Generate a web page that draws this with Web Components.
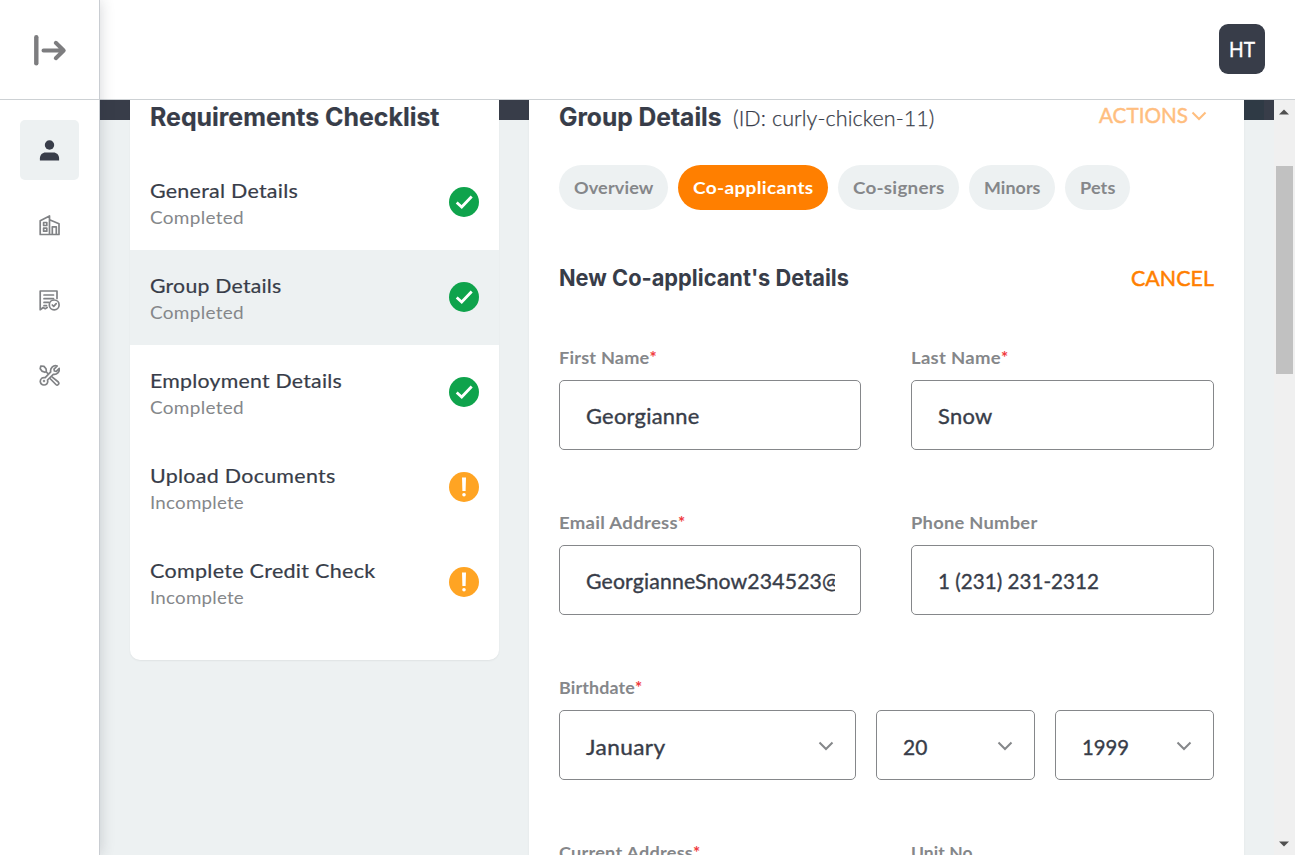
<!DOCTYPE html>
<html lang="en">
<head>
<meta charset="utf-8">
<title>Group Details</title>
<style>
html,body{margin:0;height:100%;overflow:hidden;background:#fff}
body{font-family:Lato,"Liberation Sans",sans-serif;color:#383d49}
</style>
</head>
<body>
<portal-app></portal-app>
<script>
const define = (name, html, after) => customElements.define(name, class extends HTMLElement {
  connectedCallback() {
    if (!this.shadowRoot) {
      const t = document.createElement('template');
      t.innerHTML = typeof html === 'function' ? html(this) : html;
      this.attachShadow({mode: 'open'}).append(t.content.cloneNode(true));
    }
    if (after) after(this);
  }
});

/* A single line of text whose glyphs are widened or narrowed to a given measure. */
define('ui-text', `<style>
:host{display:block;white-space:pre;width:max-content}
span{display:inline-block;transform-origin:0 50%}
:host([kind=title]){font:700 25px/30px Inter,sans-serif;-webkit-text-stroke:.2px currentColor}
:host([kind=subtitle]){font:700 22.5px/30px Inter,sans-serif}
:host([kind=id]){font:300 21px/30px Lato,sans-serif;-webkit-text-stroke:.25px currentColor}
:host([kind=item]){font:400 20px/26px Lato,sans-serif;-webkit-text-stroke:.2px currentColor}
:host([kind=state]){font:400 17.5px/24px Lato,sans-serif;color:#85878a}
:host([kind=label]){font:700 17px/20px Lato,sans-serif;color:#85878a}
:host([kind=pill]){font:700 17.5px/24px Lato,sans-serif}
:host([kind=value]){font:400 20.5px/28px Lato,sans-serif;-webkit-text-stroke:.35px currentColor}
:host([kind=link]){font:400 21px/28px Lato,sans-serif;-webkit-text-stroke:.5px currentColor}
</style><span><slot></slot></span>`, el => {
  const w = +el.getAttribute('w'), s = el.shadowRoot.querySelector('span');
  if (w) {
    const n = s.getBoundingClientRect().width, spread = Math.max(0, (w - n) * .25);
    s.style.letterSpacing = spread / el.textContent.length + 'px';
    s.style.transform = `scaleX(${w / (n + spread)})`;
    el.style.width = w + 'px';
  }
});

define('status-icon', el => `<style>:host{display:block;width:30px;height:30px}svg{display:block}</style>` +
  (el.getAttribute('state') === 'done'
  ? `<svg width="30" height="30"><circle cx="15" cy="15" r="15" fill="#0fa34c"/><path d="M7.7 15.5l5 4.5L22.7 9.5" fill="none" stroke="#fff" stroke-width="2.8"/></svg>`
  : `<svg width="30" height="30"><circle cx="15" cy="15" r="15" fill="#ffa423"/><path d="M13 5.500h4l-.4 13.500h-3.200z" fill="#fff"/><circle cx="15" cy="22.700" r="1.800" fill="#fff"/></svg>`));

define('check-item', el => `<style>
:host{display:flex;height:95px;box-sizing:border-box;padding:22px 20px 0;justify-content:space-between}
:host([active]){background:#edf1f2}
status-icon{margin-top:10px}
.s{margin-top:3px}
</style><div><ui-text class="t" kind="item" w="${el.getAttribute('w')}">${el.getAttribute('label')}</ui-text>
<ui-text class="s" kind="state" w="94">${el.getAttribute('state') === 'done' ? 'Completed' : 'Incomplete'}</ui-text></div>
<status-icon state="${el.getAttribute('state')}"></status-icon>`);

define('check-list', `<style>
:host{display:block;width:369px;height:560px;background:#fff;border-radius:0 0 10px 10px;box-shadow:0 1px 2px rgba(0,0,0,.06)}
header{height:55px;padding:2px 20px 0;box-sizing:border-box}
</style><header><ui-text kind="title" w="289.500">Requirements Checklist</ui-text></header><slot></slot>`);

define('nav-pill', el => `<style>
:host{display:flex;align-items:center;justify-content:center;height:45px;width:${el.getAttribute('box')}px;border-radius:22.5px;background:#edf1f2;color:#85878a}
:host([active]){background:#ff7f00;color:#fff}
</style><ui-text kind="pill" w="${el.getAttribute('box') - 29.5}">${el.getAttribute('label')}</ui-text>`);

define('chevron-icon', `<style>:host{display:block}svg{display:block}</style>
<svg width="16" height="10"><path d="M1.500 1.500L8 8l6.500-6.500" fill="none" stroke="currentColor" stroke-width="2"/></svg>`);

define('form-label', el => `<style>
:host{display:flex;height:20px;margin-bottom:12px}
b{font:700 17px/20px Lato,sans-serif;color:#f03a3e}
</style><ui-text kind="label" w="${el.getAttribute('w')}">${el.getAttribute('text')}</ui-text>${el.hasAttribute('required') ? '<b>*</b>' : ''}`);

define('field-box', el => `<style>
:host{display:flex;box-sizing:border-box;height:70px;border:1px solid #85878a;border-radius:5px;padding:0 25px;align-items:center;justify-content:space-between;min-width:0;background:#fff}
.v{flex:1;min-width:0;overflow:hidden;padding:1px 0 0 .5px}
:host([select]) .v{padding-top:3px}
chevron-icon{color:#85878a;margin-right:-4px;margin-top:1px}
</style><div class="v"><ui-text kind="value" w="${el.getAttribute('w')}">${el.getAttribute('value')}</ui-text></div>${el.hasAttribute('select') ? '<chevron-icon></chevron-icon>' : ''}`);

define('text-field', el => `<style>:host{display:block;min-width:0}</style>
<form-label text="${el.getAttribute('label')}" w="${el.getAttribute('lw')}" ${el.hasAttribute('required') ? 'required' : ''}></form-label>
<field-box value="${el.getAttribute('value')}" w="${el.getAttribute('w')}"></field-box>`);

define('date-field', `<style>:host{display:block;grid-column:1/-1}
div{display:grid;grid-template-columns:297px 159px 159px;gap:20px}</style>
<form-label text="Birthdate" w="76" required></form-label>
<div><field-box select value="January" w="79.500"></field-box><field-box select value="20" w="24.500"></field-box><field-box select value="1999" w="47"></field-box></div>`);

define('group-panel', `<style>
:host{display:block;width:715px;height:900px;box-sizing:border-box;padding:0 30px;background:#fff;box-shadow:0 1px 2px rgba(0,0,0,.06)}
.row{display:flex;justify-content:space-between}
.head{height:65px;padding-top:2px;box-sizing:border-box}
.name{display:flex;gap:11px}
.name ui-text+ui-text{margin-top:1px}
.act{display:flex;color:#ff7f00;opacity:.5;gap:3px;margin:-1px 7px 0 0}
.act chevron-icon{margin-top:10px}
.pills{display:flex;gap:10px}
.sub{padding-top:53px;height:138px;box-sizing:border-box}
.cancel{color:#ff7f00;margin-top:1px}
.grid{display:grid;grid-template-columns:302px 303px;column-gap:50px;row-gap:63px}
</style>
<div class="row head"><div class="name"><ui-text kind="title" w="162.500">Group Details</ui-text><ui-text kind="id" w="201.500">(ID: curly-chicken-11)</ui-text></div>
<div class="act"><ui-text kind="link" w="89">ACTIONS</ui-text><chevron-icon></chevron-icon></div></div>
<div class="pills"><nav-pill box="109" label="Overview"></nav-pill><nav-pill active box="150" label="Co-applicants"></nav-pill><nav-pill box="121" label="Co-signers"></nav-pill><nav-pill box="86" label="Minors"></nav-pill><nav-pill box="65" label="Pets"></nav-pill></div>
<div class="row sub"><ui-text kind="subtitle" w="290">New Co-applicant's Details</ui-text><ui-text class="cancel" kind="link" w="83">CANCEL</ui-text></div>
<div class="grid">
<text-field label="First Name" lw="90.500" required value="Georgianne" w="113.500"></text-field>
<text-field label="Last Name" lw="90" required value="Snow" w="54.500"></text-field>
<text-field label="Email Address" lw="119" required value="GeorgianneSnow234523@" w="254"></text-field>
<text-field label="Phone Number" lw="126.500" value="1 (231) 231-2312" w="161"></text-field>
<date-field></date-field>
<text-field label="Current Address" lw="134" required value="" w="0"></text-field>
<text-field label="Unit No." lw="66" value="" w="0"></text-field>
</div>`);

define('side-item', `<style>
:host{display:flex;width:59px;height:60px;border-radius:5px;align-items:center;justify-content:center;color:#808285}
:host([active]){background:#edf1f2;color:#383d49}
</style><slot></slot>`);

define('side-bar', `<style>
:host{display:flex;flex-direction:column;box-sizing:border-box;width:100px;height:100%;background:#fff;border-right:1px solid #c9cdd2;box-shadow:0 0 14px rgba(40,45,60,.2);position:relative;z-index:2}
.top{height:100px;box-sizing:border-box;border-bottom:1px solid #cdd1d4;display:flex;align-items:center;padding:0 0 0 33px}
nav{display:flex;flex-direction:column;gap:15px;padding:20px}
svg{display:block}
.l{fill:none;stroke:currentColor;stroke-width:1.7;stroke-linejoin:round;stroke-linecap:round}
</style>
<div class="top"><svg width="34" height="32" viewBox="0 0 34 32" fill="none" stroke="#7d7d7f" stroke-width="4"><path d="M3.300 3.300v26" stroke-width="4.400" stroke-linecap="round"/><path d="M10.500 16.500h20M22.800 8.800l7.900 7.700-7.900 7.700" stroke-linecap="round" stroke-linejoin="round"/></svg></div>
<nav>
<side-item active><svg width="21" height="22" viewBox="0 0 21 22" fill="currentColor"><circle cx="10.500" cy="6" r="4.700"/><path d="M.9 21.500V19.500C.9 15.500 3.500 13.400 6.500 13.400h8c3 0 5.600 2.100 5.600 6.100v2z"/></svg></side-item>
<side-item><svg class="l" width="21" height="22" viewBox="0 0 21 22"><path d="M1.200 20.500V6.800L10.500 2v18.500zM10.500 5.800l9.500 4v10.700H1.200M13.300 20.300v-7.500h4v7.500"/><rect x="4.600" y="8.500" width="3.200" height="3"/><rect x="4.600" y="14.200" width="3.200" height="3"/></svg></side-item>
<side-item><svg class="l" width="21" height="22" viewBox="0 0 21 22"><path d="M18 9.500V2H1.200v18.700l3-2.200 2 1.200 2-1.200M5 6h9.500M5 9.700h9.500M5 13.400h4.500M5 16.600h2.500"/><circle cx="15.200" cy="15.900" r="4.900"/><path d="M13.300 16l1.400 1.400 2.500-2.800"/></svg></side-item>
<side-item><svg class="l" width="21" height="22" viewBox="0 0 21 22"><path d="M1.800 2l3.200.4 2 2.300.4 2.800-1.500.8-3-1.200L1.200 4.800z M7.300 8l1.700 1.700M13 12.800l6.300 5.200c1.500 1.800-.8 4-2.400 2.500L11 14.500"/><path d="M18.200 2L15 5.100l.4 1.900 1.900.4 3-3c.5 3.700-2.300 6.500-6 5.900L8.500 16c1 3.400-1.600 5.200-3.800 5-3.800-.3-4.500-5-1.700-6.900 1-.6 2-.7 3.200-.4l5.500-5.800C10.900 4.400 14.200.6 18.200 2z"/><circle cx="5" cy="17" r=".4"/></svg></side-item>
</nav>`);

define('top-bar', `<style>
:host{display:flex;height:100px;box-sizing:border-box;border-bottom:1px solid #cdd1d4;background:#fff;justify-content:flex-end;padding:24px 30px 0 0}
div{width:46px;height:50px;border-radius:9px;background:#383d49;color:#fff;display:flex;align-items:center;justify-content:center}
</style><div><ui-text kind="value" w="26">HT</ui-text></div>`);

define('scroll-track', `<style>
:host{display:flex;flex-direction:column;box-sizing:border-box;width:21px;height:100%;background:#f0f0f0;padding:9px 2px 8px;align-items:center}
i{display:block;width:17px;height:208px;background:#c1c1c1;margin-top:51px}
svg{display:block;margin-right:1px}
.dn{margin-top:auto}
</style><svg width="10" height="6"><path d="M0 5.500L5 .5l5 5z" fill="#505050"/></svg><i></i><svg class="dn" width="10" height="6"><path d="M0 .5l5 5 5-5z" fill="#505050"/></svg>`);

define('portal-app', `<style>
:host{display:flex;height:855px;width:1295px;overflow:hidden}
.main{flex:1;display:flex;flex-direction:column;min-width:0}
.body{flex:1;display:flex;min-height:0}
.content{flex:1;min-width:0;overflow:hidden;display:flex;gap:30px;align-items:flex-start;padding-left:30px;background:linear-gradient(#383d49 20px,#edf1f2 20px)}
.rail{width:20px;height:20px;margin-left:-30px;background:#2f3a45}
</style>
<side-bar></side-bar>
<div class="main"><top-bar></top-bar><div class="body"><div class="content">
<check-list>
<check-item state="done" label="General Details" w="148"></check-item>
<check-item active state="done" label="Group Details" w="131.500"></check-item>
<check-item state="done" label="Employment Details" w="192"></check-item>
<check-item state="todo" label="Upload Documents" w="185.500"></check-item>
<check-item state="todo" label="Complete Credit Check" w="225.500"></check-item>
</check-list>
<group-panel></group-panel><div class="rail"></div>
</div><scroll-track></scroll-track></div></div>`);
</script>
</body>
</html>
